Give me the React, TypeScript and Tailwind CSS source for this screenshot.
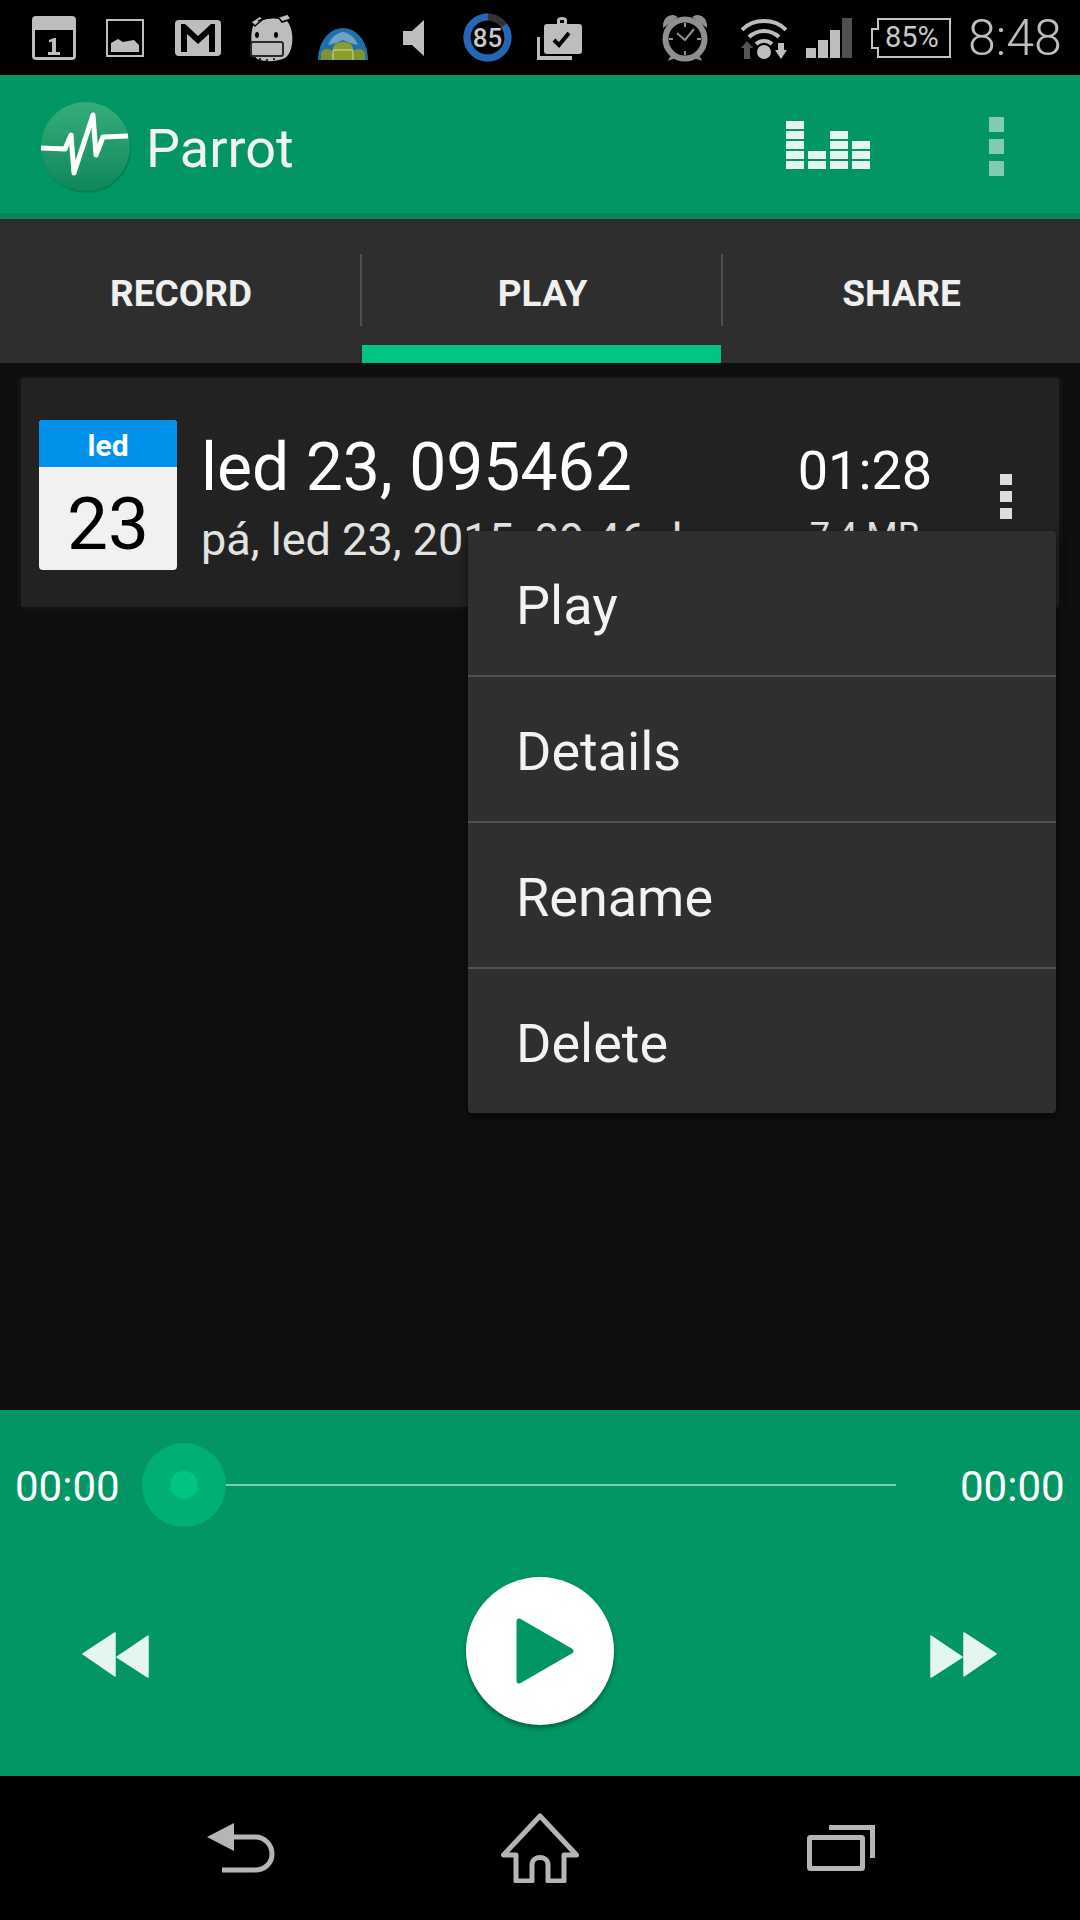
const eqColumns = [5, 2, 4, 3];
const menuItems = ["Play", "Details", "Rename", "Delete"];

function CalendarIcon() {
  return (
    <svg width="46" height="46" viewBox="0 0 46 46" className="ml-[31px]">
      <rect x="1" y="1" width="44" height="44" rx="4" fill="#bdbdbd" />
      <rect x="4" y="15" width="38" height="27" fill="#000" />
      <path d="M18 25l5-2h2v14h4v3H17v-3h4V26.500l-3 1z" fill="#bdbdbd" />
    </svg>
  );
}

function ImageIcon() {
  return (
    <svg width="38" height="38" viewBox="0 0 38 38" className="ml-[29px]">
      <rect x="1" y="1" width="36" height="36" fill="none" stroke="#bdbdbd" strokeWidth="2" />
      <path d="M5 33V24l7-4 5 3 5-1 6-1 5 5v7z" fill="#bdbdbd" />
    </svg>
  );
}

function GmailIcon() {
  return (
    <svg width="46" height="36" viewBox="0 0 46 36" className="ml-[31px]">
      <rect x="0" y="0" width="46" height="36" rx="4" fill="#bdbdbd" />
      <path d="M6 4h4l13 12L36 4h4v28h-6V14L23 24 12 14v18H6z" fill="#000" />
    </svg>
  );
}

function HippoIcon() {
  return (
    <svg width="44" height="50" viewBox="0 0 44 50" className="ml-[29px]">
      <path d="M3 13C8 5 30 3 37 8c7 8 7 26 1 34-4 7-26 8-32 3C1 38 0 22 3 13z" fill="#bdbdbd" />
      <path d="M1 9l9-6 3 3-8 7zM28 4l10-3 3 5-9 3z" fill="#bdbdbd" stroke="#000" strokeWidth="1.500" />
      <path d="M8 8c7-3 14-4 20-3" fill="none" stroke="#000" strokeWidth="1.500" />
      <rect x="1" y="29" width="32" height="14" rx="2" fill="#bdbdbd" stroke="#2a2a2a" strokeWidth="2" />
      <ellipse cx="7" cy="22" rx="2" ry="3" fill="#000" />
      <ellipse cx="26" cy="22" rx="2" ry="3" fill="#000" />
      <path d="M9 46h2M16 47h2M23 46h2" stroke="#2a2a2a" strokeWidth="2" />
    </svg>
  );
}

function GlobeIcon() {
  return (
    <svg width="50" height="32" viewBox="0 0 50 32" className="ml-[24px] mt-[13px]">
      <path d="M0 32C0 14 11 0 25 0s25 14 25 32z" fill="#1f6fa8" />
      <path d="M10 17c3-7 8-12 15-13 7 1 12 6 15 13l-8-2-7-3-7 3z" fill="#6ea3c4" />
      <path d="M15 32v-10c0-6 4-8 10-8s10 2 10 8v10z" fill="#8a9e2f" />
      <path d="M3 32v-6c0-3 3-5 6-5s6 2 6 5v6zM35 32v-6c0-3 3-5 6-5s6 2 6 5v6z" fill="#7f9430" />
      <path d="M15 22v10M35 22v10M15 22h20" stroke="#cfd8a0" strokeWidth="1" />
    </svg>
  );
}

function VolumeIcon() {
  return (
    <svg width="21" height="36" viewBox="0 0 21 36" className="ml-[35px]">
      <path d="M21 0v36L9 25H0V11h9z" fill="#bdbdbd" />
    </svg>
  );
}

function BatteryRing() {
  return (
    <div className="relative ml-[39px] flex h-[49px] w-[49px] items-center justify-center">
      <svg width="49" height="49" viewBox="0 0 49 49" className="absolute inset-0">
        <circle cx="24.500" cy="24.500" r="20.500" fill="none" stroke="#333" strokeWidth="7" />
        <circle
          cx="24.500"
          cy="24.500"
          r="20.500"
          fill="none"
          stroke="#2368b8"
          strokeWidth="7"
          strokeDasharray="109.500 128.800"
          transform="rotate(-36 24.500 24.500)"
        />
      </svg>
      <span className="relative font-['Roboto',sans-serif] text-[26px] leading-none font-medium text-[#c8c8c8]">85</span>
    </div>
  );
}

function BriefcaseIcon() {
  return (
    <svg width="46" height="46" viewBox="0 0 46 46" className="ml-[25px]">
      <path d="M1 22v21h34" fill="none" stroke="#bdbdbd" strokeWidth="4" />
      <path d="M10 9h10V5c0-4 10-4 10 0v4h12c2 0 3 1 3 3v24c0 2-1 3-3 3H10c-2 0-3-1-3-3V12c0-2 1-3 3-3z" fill="#bdbdbd" />
      <path d="M17 25l5 5 10-12" fill="none" stroke="#000" strokeWidth="4" />
      <rect x="23" y="5" width="4" height="3" fill="#000" />
    </svg>
  );
}

function AlarmIcon() {
  return (
    <svg width="46" height="48" viewBox="0 0 46 48" className="ml-[79px]">
      <path d="M2 12C2 4 9 0 14 3zM44 12c0-8-7-12-12-9zM8 45l3-5 3 3zM38 45l-3-5-3 3z" fill="#8f8f8f" stroke="#8f8f8f" strokeWidth="2" />
      <circle cx="23" cy="25" r="19.500" fill="#000" stroke="#8f8f8f" strokeWidth="6" />
      <path d="M23 9v4M23 37v4M7 25h4M35 25h4" stroke="#8f8f8f" strokeWidth="2" />
      <path d="M15 19l8 7 9-11" fill="none" stroke="#8f8f8f" strokeWidth="2" />
    </svg>
  );
}

function WifiIcon() {
  return (
    <svg width="46" height="42" viewBox="0 0 46 42" className="ml-[33px]">
      <path d="M1 13C12 1 34 1 45 13" fill="none" stroke="#bdbdbd" strokeWidth="4" />
      <path d="M8 20c9-8 21-8 30 0" fill="none" stroke="#bdbdbd" strokeWidth="4" />
      <path d="M15 27c5-4 11-4 16 0" fill="none" stroke="#bdbdbd" strokeWidth="4" />
      <circle cx="23" cy="35" r="7" fill="#bdbdbd" />
      <path d="M0 31l6-7 6 7H9v11H3V31z" fill="#555" />
      <path d="M37 26h6v7h3l-6 9-6-9h3z" fill="#bdbdbd" />
    </svg>
  );
}

function SignalIcon() {
  return (
    <div className="ml-[19px] flex h-[40px] items-end gap-[2px]">
      <div className="h-[10px] w-[10px] bg-[#bdbdbd]" />
      <div className="h-[18px] w-[10px] bg-[#bdbdbd]" />
      <div className="h-[28px] w-[10px] bg-[#bdbdbd]" />
      <div className="h-[40px] w-[10px] bg-[#4f4f4f]" />
    </div>
  );
}

function BatteryIcon() {
  return (
    <div className="relative ml-[18px] h-[40px] w-[81px]">
      <svg width="81" height="40" viewBox="0 0 81 40" className="absolute inset-0">
        <path d="M8 1h72v38H8V30H2V11h6z" fill="none" stroke="#c4c4c4" strokeWidth="2" />
      </svg>
      <span className="absolute top-[5px] left-[15px] font-['Roboto',sans-serif] text-[29px] leading-[29px] text-[#c8c8c8]">
        85%
      </span>
    </div>
  );
}

function StatusBar() {
  return (
    <div className="flex h-[75px] w-full shrink-0 items-center bg-black">
      <CalendarIcon />
      <ImageIcon />
      <GmailIcon />
      <HippoIcon />
      <GlobeIcon />
      <VolumeIcon />
      <BatteryRing />
      <BriefcaseIcon />
      <AlarmIcon />
      <WifiIcon />
      <SignalIcon />
      <BatteryIcon />
      <span className="ml-[17px] font-['Roboto',sans-serif] text-[50px] leading-none font-light text-[#bdbdbd]">8:48</span>
    </div>
  );
}

function ParrotLogo() {
  return (
    <div className="h-[89px] w-[89px] rounded-full bg-gradient-to-b from-[#35ad7b] to-[#0c885a] shadow-[1px_2px_1px_#0b7a52]">
      <svg width="89" height="89" viewBox="0 0 89 89">
        <path
          d="M0 46l24 1 6-14 3 38 19-58 3 40 7-18 25-1"
          fill="none"
          stroke="#fff"
          strokeWidth="5"
          strokeLinejoin="round"
        />
      </svg>
    </div>
  );
}

function AppBar() {
  return (
    <div className="flex h-[144px] w-full shrink-0 items-center border-b-[6px] border-[#06875a] bg-[#029664] font-['Roboto',sans-serif]">
      <div className="mt-[5px] ml-[41px] flex items-center">
        <ParrotLogo />
        <span className="mt-[4px] ml-[16px] w-[146px] text-[54px] leading-none text-[#f2f2f2]">Parrot</span>
      </div>
      <div className="mt-[2px] ml-[494px] flex items-end gap-[4px]">
        {eqColumns.map((rows, col) => (
          <div key={col} className="flex w-[18px] flex-col gap-[2px]">
            {Array.from({ length: rows }).map((_, i) => (
              <div key={i} className="h-[8px] bg-[#e5f5ef]" />
            ))}
          </div>
        ))}
      </div>
      <div className="mt-[5px] ml-[119px] flex w-[15px] flex-col gap-[7px]">
        <div className="h-[15px] bg-[#80cbb2]" />
        <div className="h-[15px] bg-[#80cbb2]" />
        <div className="h-[15px] bg-[#80cbb2]" />
      </div>
    </div>
  );
}

function Tabs() {
  return (
    <div className="flex h-[144px] w-full shrink-0 bg-[#2e2e2e] font-['Roboto',sans-serif] text-[37px] leading-none font-bold text-[#efefef]">
      <div className="relative flex w-[362px] items-center justify-center pt-[4px]">
        RECORD
        <div className="absolute top-[35px] right-0 h-[72px] w-[2px] bg-[#4f4f4f]" />
      </div>
      <div className="relative flex w-[361px] items-center justify-center pt-[4px]">
        PLAY
        <div className="absolute top-[35px] right-0 h-[72px] w-[2px] bg-[#4f4f4f]" />
        <div className="absolute bottom-0 left-0 h-[18px] w-[359px] bg-[#00c480]" />
      </div>
      <div className="flex flex-1 items-center justify-center pt-[4px]">SHARE</div>
    </div>
  );
}

function RecordingCard() {
  return (
    <div className="mx-[21px] mt-[15px] flex h-[229px] bg-[#222222] shadow-[0_0_6px_#1a1a1a]">
      <div className="mt-[42px] ml-[18px] flex h-[150px] w-[138px] shrink-0 flex-col overflow-hidden rounded-[4px] bg-[#f1f1f1]">
        <div className="flex h-[47px] items-center justify-center bg-[#0091ea] pt-[3px] text-[30px] font-bold text-white">led</div>
        <div className="flex flex-1 items-center justify-center pt-[12px] text-[73px] leading-none text-black">23</div>
      </div>
      <div className="mt-[54px] ml-[24px] flex w-[470px] shrink-0 flex-col">
        <span className="text-[66px] leading-[72px] whitespace-nowrap text-white">led 23, 095462</span>
        <span className="mt-[10px] text-[45px] leading-[52px] whitespace-nowrap text-[#e2e2e2]">pá, led 23, 2015, 09:46 dop.</span>
      </div>
      <div className="mt-[57px] ml-[119px] flex w-[150px] shrink-0 flex-col items-center">
        <span className="text-[54px] leading-[72px] text-white">01:28</span>
        <span className="mt-[7px] text-[36px] leading-[44px] text-[#e2e2e2]">7,4 MB</span>
      </div>
      <div className="mt-[96px] ml-[60px] flex w-[12px] flex-col gap-[6px]">
        <div className="h-[11px] bg-[#dddddd]" />
        <div className="h-[11px] bg-[#dddddd]" />
        <div className="h-[11px] bg-[#dddddd]" />
      </div>
    </div>
  );
}

function PopupMenu() {
  return (
    <div className="absolute top-[168px] left-[468px] w-[588px] rounded-[4px] bg-[#2f2f2f] shadow-[0_4px_10px_rgba(0,0,0,0.6)]">
      <div className="flex h-[146px] items-center border-b-2 border-[#505050] pt-[5px] pl-[48px] text-[54px] text-[#f2f2f2]">{menuItems[0]}</div>
      <div className="flex h-[146px] items-center border-b-2 border-[#505050] pt-[5px] pl-[48px] text-[54px] text-[#f2f2f2]">{menuItems[1]}</div>
      <div className="flex h-[146px] items-center border-b-2 border-[#505050] pt-[5px] pl-[48px] text-[54px] text-[#f2f2f2]">{menuItems[2]}</div>
      <div className="flex h-[144px] items-center pt-[5px] pl-[48px] text-[54px] text-[#f2f2f2]">{menuItems[3]}</div>
    </div>
  );
}

function SkipIcon({ flip }: { flip?: boolean }) {
  return (
    <svg width="68" height="46" viewBox="0 0 68 46" className={flip ? "-scale-x-100" : ""}>
      <path d="M1 22L33 1v43z" fill="#e5f5ef" stroke="#e5f5ef" strokeWidth="1.500" strokeLinejoin="round" />
      <path d="M35 25L66 4v41z" fill="#e5f5ef" stroke="#e5f5ef" strokeWidth="1.500" strokeLinejoin="round" />
    </svg>
  );
}

function Player() {
  return (
    <div className="flex h-[366px] w-full shrink-0 flex-col bg-[#029664] font-['Roboto',sans-serif]">
      <div className="flex h-[150px] items-center pl-[15px]">
        <span className="mt-[3px] w-[104px] text-[42px] leading-none text-white">00:00</span>
        <div className="relative ml-[65px] h-[2px] w-[712px] bg-[#80cbb2]">
          <div className="absolute top-[-41px] left-[-42px] flex h-[84px] w-[84px] items-center justify-center rounded-full bg-[#00b073]">
            <div className="h-[28px] w-[28px] rounded-full bg-[#00c480]" />
          </div>
        </div>
        <span className="mt-[3px] ml-[64px] w-[104px] text-[42px] leading-none text-white">00:00</span>
      </div>
      <div className="mt-[17px] flex items-center pl-[82px]">
        <div className="mt-[8px]">
          <SkipIcon />
        </div>
        <div className="ml-[316px] flex h-[148px] w-[148px] items-center justify-center rounded-full bg-white shadow-[0_3px_5px_rgba(0,0,0,0.35)]">
          <svg width="58" height="66" viewBox="0 0 58 66" className="ml-[10px]">
            <path d="M3 3l52 30L3 63z" fill="#029664" stroke="#029664" strokeWidth="5" strokeLinejoin="round" />
          </svg>
        </div>
        <div className="mt-[8px] ml-[315px]">
          <SkipIcon flip />
        </div>
      </div>
    </div>
  );
}

function NavBar() {
  return (
    <div className="flex h-[144px] w-full shrink-0 items-center bg-black">
      <svg width="68" height="50" viewBox="0 0 68 50" className="ml-[207px]">
        <path d="M0 14L27 0v28z" fill="#b5b5b5" />
        <path d="M24 14h24c10 0 17 8 17 17s-7 16-17 16H15" fill="none" stroke="#b5b5b5" strokeWidth="5" />
      </svg>
      <svg width="78" height="70" viewBox="0 0 78 70" className="ml-[226px]">
        <path
          d="M39 3L2.500 42H15v26h16V52c0-10 16-10 16 0v16h16V42h12.500z"
          fill="none"
          stroke="#b5b5b5"
          strokeWidth="5"
          strokeLinejoin="round"
        />
      </svg>
      <svg width="68" height="46" viewBox="0 0 68 46" className="ml-[228px]">
        <rect x="2.500" y="12.500" width="53" height="31" rx="1" fill="none" stroke="#b5b5b5" strokeWidth="5" />
        <path d="M22 2.500h43.500V33" fill="none" stroke="#b5b5b5" strokeWidth="5" />
      </svg>
    </div>
  );
}

export default function App() {
  return (
    <div className="flex h-[1920px] w-[1080px] flex-col overflow-hidden bg-black font-['Roboto',sans-serif]">
      <StatusBar />
      <AppBar />
      <Tabs />
      <div className="relative flex-1 bg-[#0f0f0f]">
        <RecordingCard />
        <PopupMenu />
      </div>
      <Player />
      <NavBar />
    </div>
  );
}
